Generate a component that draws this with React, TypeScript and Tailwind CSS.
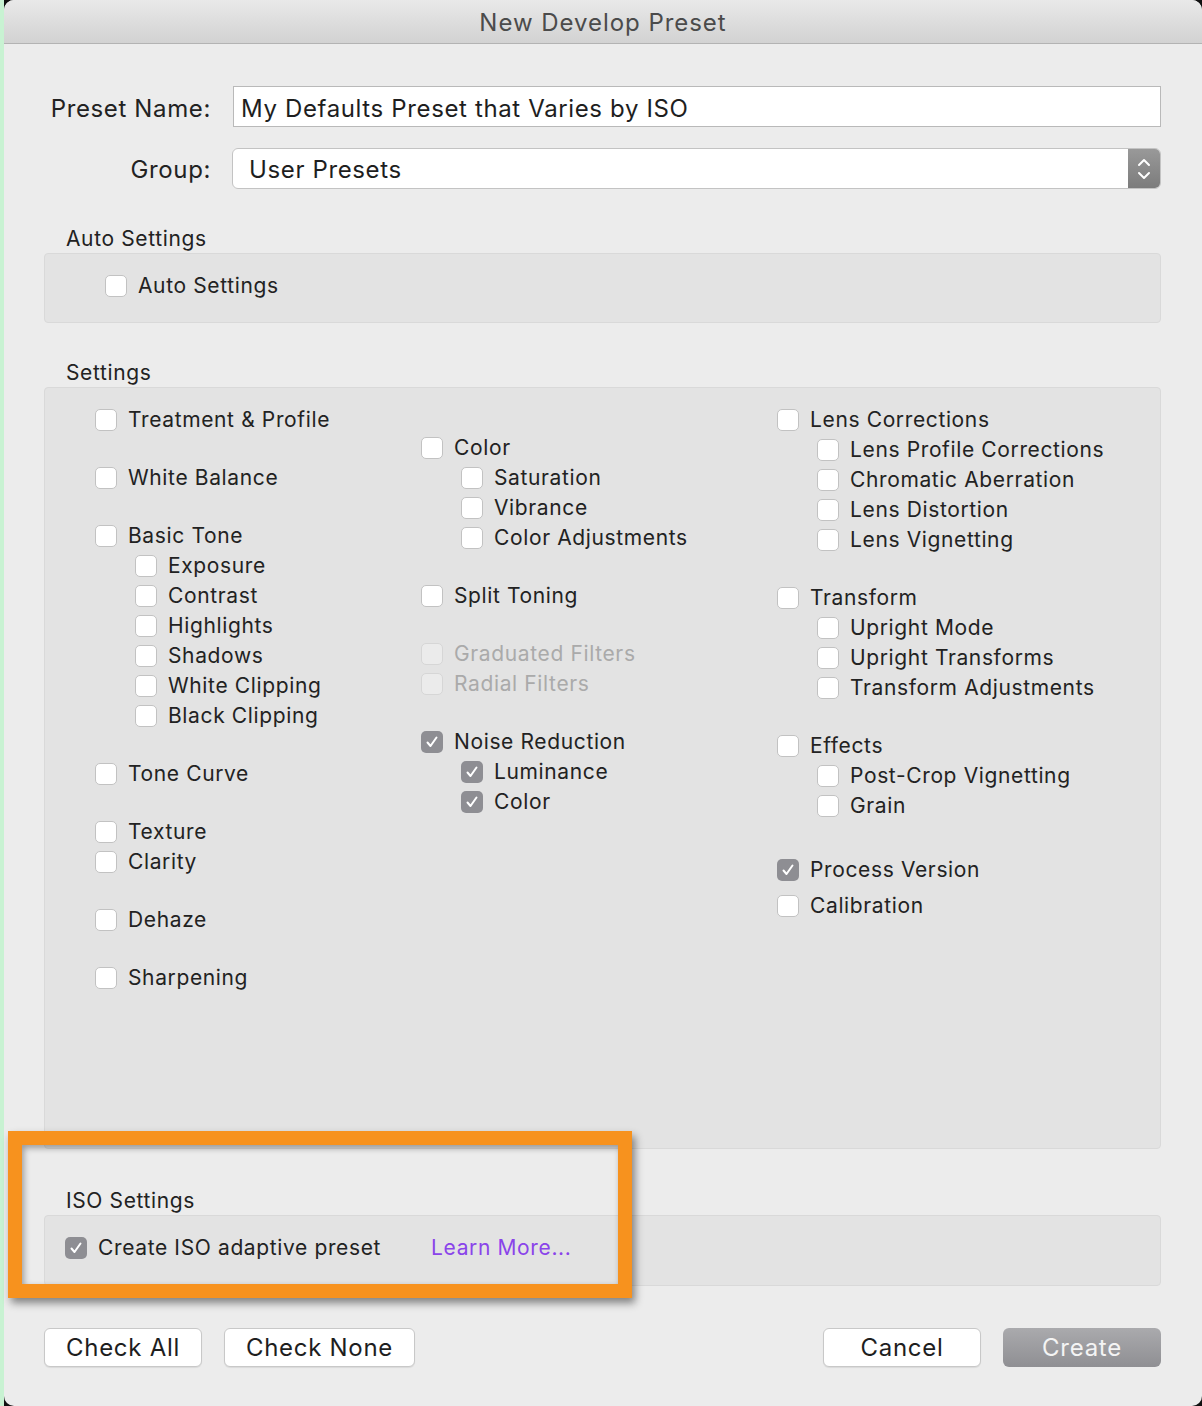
import React from "react";

type Item = { label: string; mt?: number; sub?: boolean; checked?: boolean; disabled?: boolean };

const col1: Item[] = [
  { label: "Treatment & Profile" },
  { label: "White Balance", mt: 28 },
  { label: "Basic Tone", mt: 28 },
  { label: "Exposure", sub: true },
  { label: "Contrast", sub: true },
  { label: "Highlights", sub: true },
  { label: "Shadows", sub: true },
  { label: "White Clipping", sub: true },
  { label: "Black Clipping", sub: true },
  { label: "Tone Curve", mt: 28 },
  { label: "Texture", mt: 28 },
  { label: "Clarity" },
  { label: "Dehaze", mt: 28 },
  { label: "Sharpening", mt: 28 },
];

const col2: Item[] = [
  { label: "Color", mt: 28 },
  { label: "Saturation", sub: true },
  { label: "Vibrance", sub: true },
  { label: "Color Adjustments", sub: true },
  { label: "Split Toning", mt: 28 },
  { label: "Graduated Filters", mt: 28, disabled: true },
  { label: "Radial Filters", disabled: true },
  { label: "Noise Reduction", mt: 28, checked: true },
  { label: "Luminance", sub: true, checked: true },
  { label: "Color", sub: true, checked: true },
];

const col3: Item[] = [
  { label: "Lens Corrections" },
  { label: "Lens Profile Corrections", sub: true },
  { label: "Chromatic Aberration", sub: true },
  { label: "Lens Distortion", sub: true },
  { label: "Lens Vignetting", sub: true },
  { label: "Transform", mt: 28 },
  { label: "Upright Mode", sub: true },
  { label: "Upright Transforms", sub: true },
  { label: "Transform Adjustments", sub: true },
  { label: "Effects", mt: 28 },
  { label: "Post-Crop Vignetting", sub: true },
  { label: "Grain", sub: true },
  { label: "Process Version", mt: 34, checked: true },
  { label: "Calibration", mt: 6 },
];

const Box = ({ checked, disabled }: { checked?: boolean; disabled?: boolean }) => {
  if (checked) {
    return (
      <span className="flex h-[22px] w-[22px] shrink-0 items-center justify-center rounded-[5px] bg-[#8e8e93]">
        <svg width="14" height="14" viewBox="0 0 14 14" fill="none">
          <path d="M2.5 7.5 L5.5 11 L11.5 2.5" stroke="white" strokeWidth="2" strokeLinecap="round" strokeLinejoin="round" />
        </svg>
      </span>
    );
  }
  return (
    <span
      className={
        disabled
          ? "h-[22px] w-[22px] shrink-0 rounded-[5px] border border-[#d6d6d6] bg-[#ebebeb]"
          : "h-[22px] w-[22px] shrink-0 rounded-[5px] border border-[#c2c2c2] bg-white"
      }
    />
  );
};

const Check = ({ item }: { item: Item }) => (
  <div
    className={"flex h-[30px] items-center gap-[11px] " + (item.sub ? "pl-[40px]" : "")}
    style={{ marginTop: item.mt ?? 0 }}
  >
    <Box checked={item.checked} disabled={item.disabled} />
    <span className={item.disabled ? "text-[#aaaaaa]" : "text-[#222]"}>{item.label}</span>
  </div>
);

const Column = ({ items }: { items: Item[] }) => (
  <div className="flex flex-col">
    {items.map((it, i) => (
      <Check key={i} item={it} />
    ))}
  </div>
);

const Button = ({ children, primary }: { children: React.ReactNode; primary?: boolean }) => (
  <button
    className={
      primary
        ? "h-[39px] w-[158px] rounded-[6px] bg-gradient-to-b from-[#aaaaad] to-[#8f8f93] text-[24px] tracking-[0.03em] text-[#f4f4f4]"
        : "h-[39px] rounded-[6px] border border-[#c8c8c8] bg-white text-[24px] tracking-[0.03em] text-[#1e1e1e] shadow-[0_1px_1px_rgba(0,0,0,0.08)]"
    }
  >
    {children}
  </button>
);

export default function App() {
  return (
    <div
      className="relative flex h-[1406px] w-[1202px] overflow-hidden bg-[#111]"
      style={{ fontFamily: "Inter, 'Noto Sans', sans-serif" }}
    >
      <div className="h-full w-[4px] bg-[#c8f2d2]" />
      <div className="relative flex h-full flex-1 flex-col overflow-hidden rounded-[10px] bg-[#ececec] text-[21px] tracking-[0.03em] text-[#222]">
        {/* title bar */}
        <div className="flex h-[44px] shrink-0 items-center justify-center border-b border-[#b3b3b3] bg-gradient-to-b from-[#e9e9e9] to-[#d2d2d2] pt-[3px] text-[24px] tracking-[0.04em] text-[#4b4b4b]">
          New Develop Preset
        </div>

        <div className="flex flex-col pl-[40px] pr-[41px]">
          <div className="mt-[42px] flex items-center">
            <span className="w-[167px] pt-[5px] text-right text-[24px] text-[#222]">Preset Name:</span>
            <div className="ml-[22px] flex h-[41px] flex-1 items-center border border-[#b9b9b9] bg-white pl-[7px] pt-[5px] text-[24px] text-[#1e1e1e]">
              My Defaults Preset that Varies by ISO
            </div>
          </div>

          <div className="mt-[21px] flex items-center">
            <span className="w-[167px] pt-[2px] text-right text-[24px] text-[#222]">Group:</span>
            <div className="ml-[21px] flex h-[41px] flex-1 items-center overflow-hidden rounded-[6px] border border-[#c3c3c3] bg-white">
              <span className="flex-1 pl-[16px] pt-[2px] text-[24px] text-[#1e1e1e]">User Presets</span>
              <span className="flex h-full w-[32px] items-center justify-center bg-gradient-to-b from-[#999] to-[#7c7c7c]">
                <svg width="16" height="26" viewBox="0 0 16 26" fill="none">
                  <path d="M3 9 L8 4 L13 9" stroke="white" strokeWidth="2" strokeLinecap="round" strokeLinejoin="round" />
                  <path d="M3 17 L8 22 L13 17" stroke="white" strokeWidth="2" strokeLinecap="round" strokeLinejoin="round" />
                </svg>
              </span>
            </div>
          </div>

          {/* Auto settings */}
          <div className="mt-[38px] h-[24px] pl-[22px] leading-[24px]">Auto Settings</div>
          <div className="mt-[2px] flex h-[70px] items-center rounded-[4px] border border-[#d9d9d9] bg-[#e3e3e3] pb-[4px] pl-[60px]">
            <Check item={{ label: "Auto Settings" }} />
          </div>

          {/* Settings */}
          <div className="mt-[38px] h-[24px] pl-[22px] leading-[24px]">Settings</div>
          <div className="mt-[2px] grid h-[762px] grid-cols-[326px_356px_1fr] rounded-[4px] border border-[#d9d9d9] bg-[#e3e3e3] pl-[50px] pt-[17px]">
            <Column items={col1} />
            <Column items={col2} />
            <Column items={col3} />
          </div>

          {/* ISO settings */}
          <div className="mt-[40px] h-[24px] pl-[22px] leading-[24px]">ISO Settings</div>
          <div className="mt-[2px] flex h-[71px] items-center rounded-[4px] border border-[#d9d9d9] bg-[#e3e3e3] pb-[5px] pl-[20px]">
            <Check item={{ label: "Create ISO adaptive preset", checked: true }} />
            <span className="ml-[50px] text-[#8a44ea]">Learn More...</span>
          </div>

          {/* buttons */}
          <div className="mt-[42px] flex items-center">
            <div className="w-[158px]">
              <Button>
                <span className="block w-[156px]">Check All</span>
              </Button>
            </div>
            <div className="ml-[22px]">
              <Button>
                <span className="block w-[189px]">Check None</span>
              </Button>
            </div>
            <div className="ml-auto flex gap-[22px]">
              <Button>
                <span className="block w-[156px]">Cancel</span>
              </Button>
              <Button primary>Create</Button>
            </div>
          </div>
        </div>
      </div>

      {/* orange annotation frame */}
      <div className="absolute left-[8px] top-[1131px] h-[167px] w-[624px] border-[14px] border-[#f7921e] shadow-[3px_5px_8px_rgba(0,0,0,0.45),inset_2px_3px_6px_rgba(0,0,0,0.35)]" />
    </div>
  );
}
